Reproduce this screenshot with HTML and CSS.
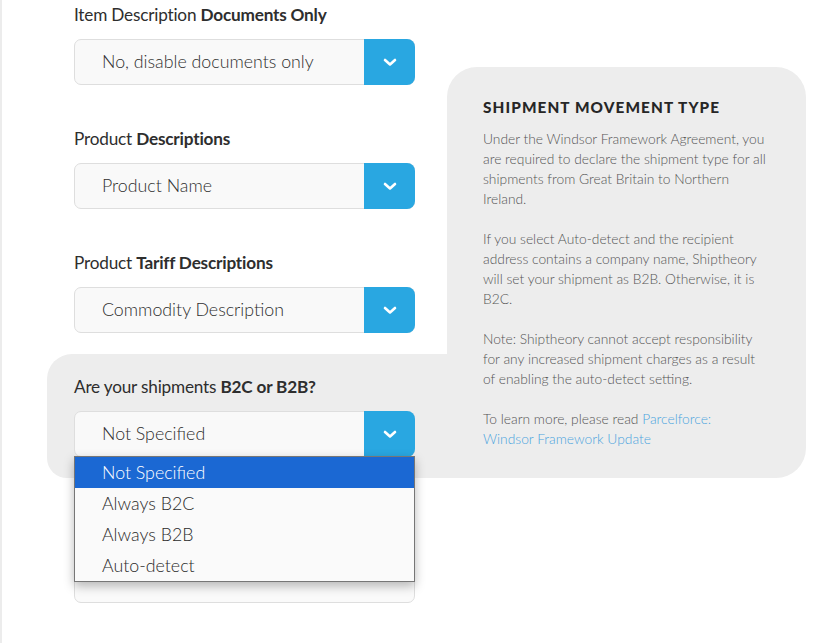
FILE: index.html
```html
<!DOCTYPE html>
<html lang="en">
<head>
<meta charset="utf-8">
<title>Shipment settings</title>
<link rel="stylesheet" href="styles.css">
</head>
<body>
<div class="page">
  <div class="form-col">
    <div class="group">
      <div class="label">Item Description <b>Documents Only</b></div>
      <div class="select">
        <span class="value">No, disable documents only</span>
        <span class="btn"><svg width="14" height="9" viewBox="0 0 14 9"><polyline points="2,2 7,6.5 12,2" fill="none" stroke="#fff" stroke-width="2.6" stroke-linecap="round" stroke-linejoin="round"/></svg></span>
      </div>
    </div>
    <div class="group">
      <div class="label">Product <b>Descriptions</b></div>
      <div class="select">
        <span class="value">Product Name</span>
        <span class="btn"><svg width="14" height="9" viewBox="0 0 14 9"><polyline points="2,2 7,6.5 12,2" fill="none" stroke="#fff" stroke-width="2.6" stroke-linecap="round" stroke-linejoin="round"/></svg></span>
      </div>
    </div>
    <div class="group">
      <div class="label">Product <b>Tariff Descriptions</b></div>
      <div class="select">
        <span class="value">Commodity Description</span>
        <span class="btn"><svg width="14" height="9" viewBox="0 0 14 9"><polyline points="2,2 7,6.5 12,2" fill="none" stroke="#fff" stroke-width="2.6" stroke-linecap="round" stroke-linejoin="round"/></svg></span>
      </div>
    </div>
    <div class="group hl">
      <div class="label">Are your shipments <b>B2C or B2B?</b></div>
      <div class="select open">
        <span class="value">Not Specified</span>
        <span class="btn"><svg width="14" height="9" viewBox="0 0 14 9"><polyline points="2,2 7,6.5 12,2" fill="none" stroke="#fff" stroke-width="2.6" stroke-linecap="round" stroke-linejoin="round"/></svg></span>
        <ul class="menu">
          <li class="active">Not Specified</li>
          <li>Always B2C</li>
          <li>Always B2B</li>
          <li>Auto-detect</li>
        </ul>
      </div>
    </div>
    <div class="group after-hl">
      <div class="label label-empty"></div>
      <div class="select plain"></div>
    </div>
  </div>
  <aside class="info">
    <h3>Shipment Movement Type</h3>
    <p>Under the Windsor Framework Agreement, you are required to declare the shipment type for all shipments from Great Britain to Northern Ireland.</p>
    <p>If you select Auto-detect and the recipient address contains a company name, Shiptheory will set your shipment as B2B. Otherwise, it is B2C.</p>
    <p>Note: Shiptheory cannot accept responsibility for any increased shipment charges as a result of enabling the auto-detect setting.</p>
    <p>To learn more, please read <a href="#">Parcelforce:</a> <a href="#" class="nowrap">Windsor Framework Update</a></p>
  </aside>
</div>
</body>
</html>
```
FILE: styles.css
```css
html, body {
  margin: 0;
  padding: 0;
  background: #fff;
}
body {
  font-family: "Lato", "Open Sans", sans-serif;
  color: #333;
}
.page {
  display: flex;
  align-items: flex-start;
  height: 643px;
  border-left: 2px solid #ececec;
  box-sizing: border-box;
  overflow: hidden;
}
.form-col {
  margin-left: 72px;
  width: 341px;
  padding-top: 3px;
  flex: none;
}
.group + .group {
  margin-top: 42px;
}
.group.hl {
  margin-top: 21px;
  margin-left: -27px;
  margin-right: -32px;
  padding: 21px 32px 21px 27px;
  background: #ededed;
  border-radius: 25px 0 0 20px;
  position: relative;
  z-index: 2;
}
.group.after-hl {
  margin-top: 43px;
}
.label {
  font-size: 17.2px;
  line-height: 24px;
  margin-bottom: 12px;
  color: #2e2e2e;
  font-weight: 400;
  letter-spacing: -0.2px;
}
.label-empty {
  height: 24px;
}
.label b {
  font-weight: 700;
}
.select {
  position: relative;
  display: flex;
  height: 46px;
  box-sizing: border-box;
  border: 1px solid #dedede;
  border-radius: 7px;
  background: #f9f9f9;
}
.select .value {
  flex: 1;
  padding-left: 27px;
  line-height: 42px;
  font-size: 17.8px;
  font-weight: 300;
  color: #2f2f2f;
  white-space: nowrap;
}
.select .btn {
  width: 51px;
  margin: -1px -1px -1px 0;
  background: #29a7e1;
  border-radius: 0 8px 8px 0;
  display: flex;
  align-items: center;
  justify-content: center;
}
.select .btn svg {
  display: block;
}
.select.plain {
  background: #fafafa;
}
.menu {
  position: absolute;
  top: 100%;
  left: -1px;
  right: -1px;
  margin: 0;
  padding: 0;
  list-style: none;
  background: #fafafa;
  border: 1px solid #767676;
  box-shadow: 0 4px 10px rgba(0, 0, 0, 0.28);
  z-index: 5;
}
.menu li {
  height: 31px;
  line-height: 30px;
  padding-left: 27px;
  font-size: 17.8px;
  font-weight: 300;
  color: #2a2a2a;
}
.menu li.active {
  background: #1b68d3;
  color: #fff;
}
.info {
  flex: none;
  width: 359px;
  box-sizing: border-box;
  margin-left: 32px;
  margin-top: 67px;
  height: 411px;
  padding: 30px 36px 20px 36px;
  background: #ededed;
  border-radius: 30px 30px 30px 0;
}
.info h3 {
  margin: 0 0 12px 0;
  font-size: 15.3px;
  line-height: 20px;
  font-weight: 900;
  letter-spacing: 1.1px;
  text-transform: uppercase;
  color: #262626;
}
.info p {
  margin: 0 0 20px 0;
  font-size: 13.8px;
  line-height: 20px;
  font-weight: 300;
  color: #555;
}
.info a {
  color: #4ba4de;
  text-decoration: none;
}
.info a.nowrap {
  white-space: nowrap;
}
```
